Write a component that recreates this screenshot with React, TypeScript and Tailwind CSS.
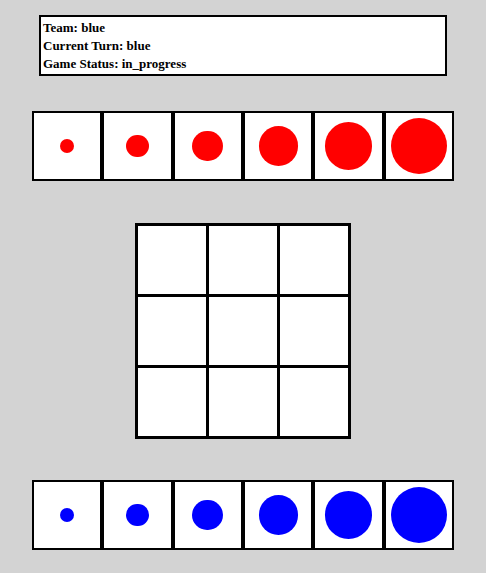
import React from 'react';

type Team = 'red' | 'blue';

// piece sizes as a fraction of the 70px tray slot
const pieceSizes = [0.2, 0.32, 0.44, 0.56, 0.68, 0.8];

const game = {
    team: 'blue' as Team,
    currentTurn: 'blue' as Team,
    status: 'in_progress',
};

function PieceTray({ team }: { team: Team }) {
    return (
        <div className="flex w-[422px]">
            {pieceSizes.map((size, i) => (
                <div key={i} className="flex-1 h-[70px] border-2 border-black bg-white flex items-center justify-center">
                    <div
                        className={`rounded-full ${team === 'red' ? 'bg-[#ff0000]' : 'bg-[#0000ff]'}`}
                        style={{ width: `${size * 70}px`, height: `${size * 70}px` }}
                    />
                </div>
            ))}
        </div>
    );
}

function Board() {
    const cells = Array.from({ length: 9 });
    return (
        <div className="grid grid-cols-3 gap-[3px] p-[3px] bg-black">
            {cells.map((_, i) => (
                <div key={i} className="w-[68px] h-[68px] bg-white" />
            ))}
        </div>
    );
}

export default function App() {
    return (
        <div className="min-h-screen bg-[#d3d3d3] flex flex-col items-center pt-[15px] pb-[24px] font-['Liberation_Serif',serif]">
            <div className="w-[408px] border-2 border-black bg-white px-[2px] pt-[2px] pb-[1px] text-[13px] leading-[18px] font-bold text-black">
                <div>Team: {game.team}</div>
                <div>Current Turn: {game.currentTurn}</div>
                <div>Game Status: {game.status}</div>
            </div>
            <div className="mt-[35px]">
                <PieceTray team="red" />
            </div>
            <div className="mt-[42px]">
                <Board />
            </div>
            <div className="mt-[41px]">
                <PieceTray team="blue" />
            </div>
        </div>
    );
}
